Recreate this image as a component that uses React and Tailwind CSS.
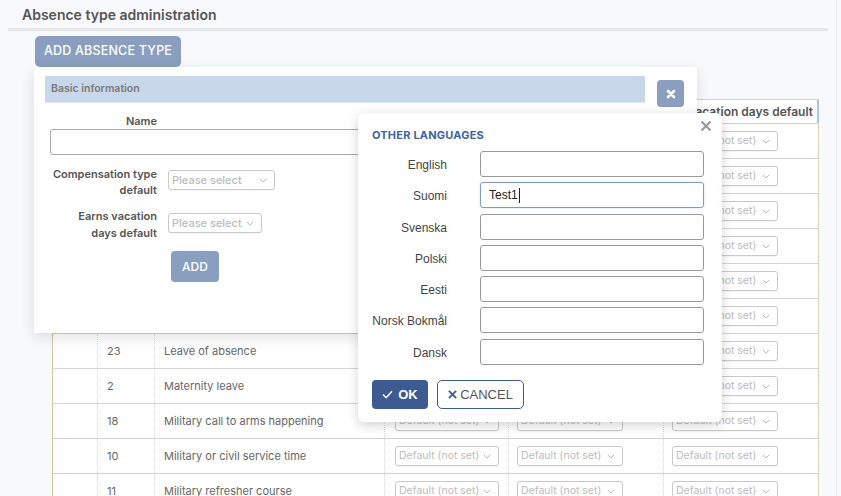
import React from 'react';

const rows = [
  { id: '14', name: 'Annual leave' },
  { id: '5', name: 'Child care leave' },
  { id: '7', name: 'Family leave' },
  { id: '21', name: 'Flexitime leave' },
  { id: '3', name: 'Illness' },
  { id: '9', name: 'Jury duty' },
  { id: '23', name: 'Leave of absence' },
  { id: '2', name: 'Maternity leave' },
  { id: '18', name: 'Military call to arms happening' },
  { id: '10', name: 'Military or civil service time' },
  { id: '11', name: 'Military refresher course' },
];

const languages = ['English', 'Suomi', 'Svenska', 'Polski', 'Eesti', 'Norsk Bokmål', 'Dansk'];

const Chevron = () => (
  <svg viewBox="0 0 10 6" className="w-[8px] h-[5px] shrink-0" fill="none" stroke="#b5b5b5" strokeWidth="1.2">
    <path d="M1 1l4 4 4-4" />
  </svg>
);

// small select box used in table rows and the form
const MiniSelect = ({ label, width, size = 'text-[10.5px]' }) => (
  <div className={`${width} h-[20px] flex items-center justify-between border border-[#c9c9c9] rounded-[3px] bg-white pl-[3px] pr-[7px] shadow-[0_1px_1px_rgba(0,0,0,0.04)]`}>
    <span className={`${size} text-[#bcbcbc] whitespace-nowrap`}>{label}</span>
    <Chevron />
  </div>
);

const App = () => {
  return (
    <div className="w-[841px] h-[496px] overflow-hidden relative bg-[#f8f9fc] font-['Inter',sans-serif] flex">
      {/* main column */}
      <div className="w-[837px] shrink-0 border-r border-[#e6e7ea] flex flex-col">
        <h1 className="shrink-0 pl-[22px] pt-[6px] h-[28px] text-[14px] leading-[18px] font-semibold text-[#555]">
          Absence type administration
        </h1>
        <div className="shrink-0 mx-[8px] h-[3px] bg-[#e6e6e6]" />
        <div className="shrink-0 pl-[35px] pt-[5px]">
          <button className="w-[146px] h-[31px] rounded-[5px] bg-[#8a9fc0] text-white text-[12.5px] font-medium tracking-[0.2px]">
            ADD ABSENCE TYPE
          </button>
        </div>

        {/* table */}
        <div className="shrink-0 ml-[52px] mt-[32px] w-[767px] bg-white border-l border-[#cdc7a4] border-r border-r-[#d8d3b6] border-r-dotted">
          <div className="grid grid-cols-[44px_57px_230px_124px_155px_156px] h-[25px] border-t border-[#d0d0d0] border-b border-b-[#d0d0d0] text-[12px] font-semibold text-[#555]">
            <div className="px-[6px] flex items-center" />
            <div className="px-[8px] flex items-center">ID</div>
            <div className="px-[10px] flex items-center">Name</div>
            <div className="px-[8px] flex items-center whitespace-nowrap overflow-hidden">Compensation type</div>
            <div className="px-[8px] flex items-center whitespace-nowrap overflow-hidden">Compensation default</div>
            <div className="pr-[4px] flex items-center justify-end whitespace-nowrap overflow-hidden border-r-2 border-[#a9c4ea]">
              Earns vacation days default
            </div>
          </div>
          {rows.map((r) => (
            <div key={r.id} className="grid grid-cols-[44px_57px_230px_124px_155px_156px] h-[35px] border-b border-[#d3d3d3] text-[11px] text-[#666]">
              <div />
              <div className="pl-[9px] flex items-center border-l border-dotted border-[#dcdcdc]">{r.id}</div>
              <div className="pl-[9px] flex items-center border-l border-dotted border-[#dcdcdc]">{r.name}</div>
              <div className="pl-[10px] flex items-center border-l border-dotted border-[#dcdcdc]">
                <MiniSelect label="Default (not set)" width="w-[104px]" />
              </div>
              <div className="pl-[8px] flex items-center border-l border-dotted border-[#dcdcdc]">
                <MiniSelect label="Default (not set)" width="w-[106px]" />
              </div>
              <div className="pl-[8px] flex items-center border-l border-dotted border-[#dcdcdc]">
                <MiniSelect label="Default (not set)" width="w-[106px]" />
              </div>
            </div>
          ))}
        </div>
      </div>

      {/* basic information popup */}
      <div className="absolute left-[34px] top-[67px] w-[663px] h-[266px] bg-white shadow-[0_4px_14px_rgba(0,0,0,0.12)]">
        <div className="flex pt-[9px] pl-[11px]">
          <div className="w-[600px] h-[27px] bg-[#c8d7ea] border-b border-[#dde6f2] pl-[6px] flex items-center text-[10.5px] font-semibold text-[#7a7a7a]">
            Basic information
          </div>
          <button className="ml-[12px] mt-[4px] w-[27px] h-[27px] rounded-[4px] bg-[#8a9fc0] flex items-center justify-center">
            <svg viewBox="0 0 10 10" className="w-[10px] h-[10px]" stroke="white" strokeWidth="2.6" strokeLinecap="round">
              <path d="M2 2l6 6M8 2l-6 6" />
            </svg>
          </button>
        </div>
        <div className="pl-[16px] pt-[7px] text-[11px] font-semibold text-[#555]">
          <div className="w-[107px] text-right leading-[14px]">Name</div>
          <div className="mt-[1px] w-[600px] h-[26px] border border-[#a9a9a9] rounded-[3px]" />
          <div className="flex items-start mt-[11px]">
            <div className="w-[107px] text-right leading-[16px]">Compensation type<br />default</div>
            <div className="ml-[11px] mt-[4px]">
              <MiniSelect label="Please select" width="w-[107px]" size="text-[11px] font-medium" />
            </div>
          </div>
          <div className="flex items-start mt-[10px]">
            <div className="w-[107px] text-right leading-[17px]">Earns vacation<br />days default</div>
            <div className="ml-[11px] mt-[5px]">
              <MiniSelect label="Please select" width="w-[94px]" size="text-[11px] font-medium" />
            </div>
          </div>
          <button className="ml-[121px] mt-[9px] w-[48px] h-[31px] rounded-[4px] bg-[#8a9fc0] text-white text-[12px] font-medium">
            ADD
          </button>
        </div>
      </div>

      {/* other languages modal */}
      <div className="absolute left-[358px] top-[113px] w-[364px] h-[309px] bg-white rounded-[6px] shadow-[0_3px_12px_rgba(0,0,0,0.18)] font-['Liberation_Sans',Arial,sans-serif]">
        <div className="flex justify-between pl-[14px] pr-[10px] pt-[15px]">
          <div className="text-[11px] leading-[14px] font-bold text-[#3b64a0] tracking-[0.2px] font-['Inter',sans-serif]">
            OTHER LANGUAGES
          </div>
          <svg viewBox="0 0 12 12" className="w-[12px] h-[12px] -mt-[8px]" stroke="#999" strokeWidth="2.2">
            <path d="M1.5 1.5l9 9M10.5 1.5l-9 9" />
          </svg>
        </div>
        <div className="mt-[9px] grid grid-cols-[75px_224px] gap-x-[33px] gap-y-[5.3px] pl-[14px]">
          {languages.map((lang) => (
            <React.Fragment key={lang}>
              <div className="h-[26px] pt-[2px] flex items-center justify-end text-[12px] text-[#444]">{lang}</div>
              {lang === 'Suomi' ? (
                <div className="h-[26px] border border-[#7f9bc6] rounded-[3px] flex items-center pl-[8px] text-[12px] text-[#222] shadow-[0_0_2px_rgba(80,120,200,0.35)]">
                  Test1<span className="w-px h-[15px] bg-[#222] ml-[1px]" />
                </div>
              ) : (
                <div className="h-[26px] border border-[#9a9a9a] rounded-[3px]" />
              )}
            </React.Fragment>
          ))}
        </div>
        <div className="flex gap-[9px] pl-[14px] mt-[15px]">
          <button className="w-[56px] h-[29px] rounded-[4px] bg-[#3d5b91] text-white text-[13px] font-bold flex items-center justify-center gap-[5px]">
            <svg viewBox="0 0 12 10" className="w-[11px] h-[9px]" fill="none" stroke="white" strokeWidth="1.6">
              <path d="M1 5l3.5 3.5L11 1.5" />
            </svg>
            OK
          </button>
          <button className="w-[87px] h-[29px] rounded-[5px] bg-white border border-[#3d5b91] text-[13px] text-[#555] flex items-center justify-center gap-[3px]">
            <svg viewBox="0 0 10 10" className="w-[9px] h-[9px]" stroke="#3d5b91" strokeWidth="2">
              <path d="M1 1l8 8M9 1l-8 8" />
            </svg>
            CANCEL
          </button>
        </div>
      </div>
    </div>
  );
};

export default App;
